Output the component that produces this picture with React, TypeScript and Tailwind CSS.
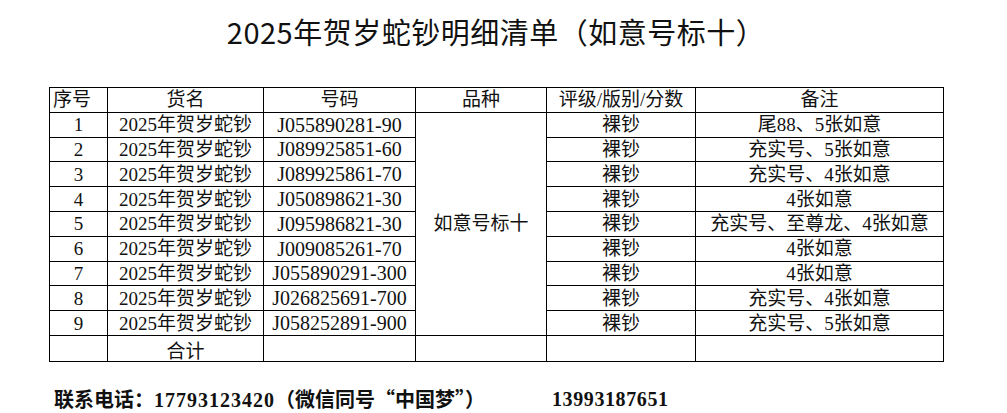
const rows = [
  { no: 1, code: 'J055890281-90', note: '尾88、5张如意' },
  { no: 2, code: 'J089925851-60', note: '充实号、5张如意' },
  { no: 3, code: 'J089925861-70', note: '充实号、4张如意' },
  { no: 4, code: 'J050898621-30', note: '4张如意' },
  { no: 5, code: 'J095986821-30', note: '充实号、至尊龙、4张如意' },
  { no: 6, code: 'J009085261-70', note: '4张如意' },
  { no: 7, code: 'J055890291-300', note: '4张如意' },
  { no: 8, code: 'J026825691-700', note: '充实号、4张如意' },
  { no: 9, code: 'J058252891-900', note: '充实号、5张如意' },
]

const cell = 'border border-black p-0 h-[24.8px] text-center align-middle whitespace-nowrap'

export default function App() {
  return (
    <div className="w-[1007px] h-[413px] bg-white text-[#111] font-['Liberation_Serif','Noto_Sans_CJK_SC',serif] overflow-hidden">
      <div className="pl-[49px] pt-[11px]">
        <div className="w-[894px] flex justify-center">
          <h1 className="text-[29px] leading-[40px] font-['Noto_Sans_CJK_SC',sans-serif] font-normal tracking-[0.5px]">
            2025年贺岁蛇钞明细清单（如意号标十）
          </h1>
        </div>

        <table className="mt-[36px] w-[894px] border-collapse table-fixed text-[19px] leading-none">
          <colgroup>
            <col className="w-[58px]" />
            <col className="w-[156px]" />
            <col className="w-[152px]" />
            <col className="w-[131px]" />
            <col className="w-[149px]" />
            <col className="w-[248px]" />
          </colgroup>
          <thead>
            <tr>
              <th className={`${cell} font-normal !text-left pl-[3px]`}>序号</th>
              <th className={`${cell} font-normal`}>货名</th>
              <th className={`${cell} font-normal`}>号码</th>
              <th className={`${cell} font-normal`}>品种</th>
              <th className={`${cell} font-normal`}>评级/版别/分数</th>
              <th className={`${cell} font-normal`}>备注</th>
            </tr>
          </thead>
          <tbody>
            {rows.map((r, i) => (
              <tr key={r.no}>
                <td className={cell}>{r.no}</td>
                <td className={cell}>2025年贺岁蛇钞</td>
                <td className={`${cell} text-[20px]`}>{r.code}</td>
                {i === 0 && (
                  <td rowSpan={9} className={cell}>如意号标十</td>
                )}
                <td className={cell}>裸钞</td>
                <td className={cell}>{r.note}</td>
              </tr>
            ))}
            <tr>
              <td className={cell}></td>
              <td className={`${cell} pt-[6px]`}>合计</td>
              <td className={cell}></td>
              <td className={cell}></td>
              <td className={cell}></td>
              <td className={cell}></td>
            </tr>
          </tbody>
        </table>

        <div className="mt-[27px] pl-[5px] flex items-center text-[20px] font-bold leading-none">
          <span className="w-[498px] whitespace-nowrap">
            联系电话：<span className="tracking-[1px]">17793123420</span>
            <span className="font-['Noto_Sans_CJK_SC',sans-serif]">（微信同号“中国梦”）</span>
          </span>
          <span className="tracking-[0.6px]">13993187651</span>
        </div>
      </div>
    </div>
  )
}
